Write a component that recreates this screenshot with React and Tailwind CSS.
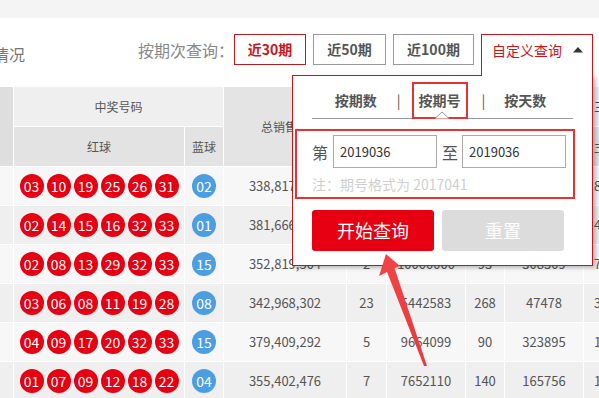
import React from 'react';

const FONT = "font-['Noto_Sans_CJK_SC','Microsoft_YaHei',sans-serif]";

const ROWS = [
  { red: ['03', '10', '19', '25', '26', '31'], blue: '02', sales: '338,817,206', c4: '6', c5: '7521843', c6: '112', c7: '168830', c8: '854' },
  { red: ['02', '14', '15', '16', '32', '33'], blue: '01', sales: '381,666,912', c4: '12', c5: '6127405', c6: '176', c7: '92114', c8: '412' },
  { red: ['02', '08', '13', '29', '32', '33'], blue: '15', sales: '352,819,504', c4: '2', c5: '10000000', c6: '93', c7: '308309', c8: '723' },
  { red: ['03', '06', '08', '11', '19', '28'], blue: '08', sales: '342,968,302', c4: '23', c5: '5442583', c6: '268', c7: '47478', c8: '3621' },
  { red: ['04', '09', '17', '20', '32', '33'], blue: '15', sales: '379,409,292', c4: '5', c5: '9664099', c6: '90', c7: '323895', c8: '1386' },
  { red: ['01', '07', '09', '12', '18', '22'], blue: '04', sales: '355,402,476', c4: '7', c5: '7652110', c6: '140', c7: '165756', c8: '1752' },
];

function Ball({ n, blue }) {
  return (
    <div className={`w-[24px] h-[24px] rounded-full flex items-center justify-center text-white text-[14px] leading-none ${blue ? 'bg-[#4c9ee3]' : 'bg-[#e60012]'}`}>
      {n}
    </div>
  );
}

function Toolbar() {
  return (
    <div className="h-[69px] flex items-start pt-[16px] pr-[6px]">
      <div className="ml-[-39px] mt-[10px] text-[16px] leading-[20px] text-[#777] whitespace-nowrap">开奖情况</div>
      <div className="ml-auto flex items-start">
        <div className="mt-[6px] text-[16px] leading-[20px] text-[#888] whitespace-nowrap">按期次查询：</div>
        <button className="w-[72px] h-[31px] border border-[#b81c22] text-[#c8161d] text-[14px] font-bold">近30期</button>
        <button className="ml-[7px] w-[73px] h-[31px] border border-[#999] text-[#555] text-[14px] font-bold">近50期</button>
        <button className="ml-[7px] w-[81px] h-[31px] border border-[#999] text-[#555] text-[14px] font-bold">近100期</button>
        <div className="relative z-20 ml-[7px] w-[112px] h-[42px] border border-b-0 border-[#c0161e] bg-white flex items-start pt-[5px] pl-[10px]">
          <span className="text-[14px] leading-[20px] text-[#c8161d]">自定义查询</span>
          <svg className="ml-[11px] mt-[6px]" width="10" height="7" viewBox="0 0 10 7"><path d="M0 6.5 L5 1 L10 6.5 Z" fill="#333" /></svg>
        </div>
      </div>
    </div>
  );
}

function HeaderCell({ w, h, bg, children, className = '' }) {
  return (
    <div className={`${w} ${h} ${bg} flex items-center justify-center text-[12px] text-[#555] border-r border-b border-white shrink-0 ${className}`}>
      {children}
    </div>
  );
}

function Table() {
  return (
    <div className="flex flex-col">
      <div className="flex">
        <HeaderCell w="w-[14px]" h="h-[80px]" bg="bg-[#dedede]" />
        <div className="flex flex-col">
          <HeaderCell w="w-[210px]" h="h-[40px]" bg="bg-[#efefef]">中奖号码</HeaderCell>
          <div className="flex">
            <HeaderCell w="w-[171px]" h="h-[40px]" bg="bg-[#e3e3e3]">红球</HeaderCell>
            <HeaderCell w="w-[39px]" h="h-[40px]" bg="bg-[#e3e3e3]">蓝球</HeaderCell>
          </div>
        </div>
        <HeaderCell w="w-[123px]" h="h-[80px]" bg="bg-[#e4e4e4]">总销售额</HeaderCell>
        <div className="flex flex-col">
          <HeaderCell w="w-[119px]" h="h-[40px]" bg="bg-[#efefef]">一等奖</HeaderCell>
          <div className="flex">
            <HeaderCell w="w-[40px]" h="h-[40px]" bg="bg-[#e3e3e3]">注数</HeaderCell>
            <HeaderCell w="w-[79px]" h="h-[40px]" bg="bg-[#e3e3e3]">奖金</HeaderCell>
          </div>
        </div>
        <div className="flex flex-col">
          <HeaderCell w="w-[118px]" h="h-[40px]" bg="bg-[#efefef]">二等奖</HeaderCell>
          <div className="flex">
            <HeaderCell w="w-[39px]" h="h-[40px]" bg="bg-[#e3e3e3]">注数</HeaderCell>
            <HeaderCell w="w-[79px]" h="h-[40px]" bg="bg-[#e3e3e3]">奖金</HeaderCell>
          </div>
        </div>
        <div className="flex flex-col">
          <HeaderCell w="w-[80px]" h="h-[40px]" bg="bg-[#efefef]" className="justify-start pl-[10px]">三等奖</HeaderCell>
          <HeaderCell w="w-[80px]" h="h-[40px]" bg="bg-[#e3e3e3]" className="justify-start pl-[10px]">主数</HeaderCell>
        </div>
      </div>
      {ROWS.map((r, i) => {
        const bg = i % 2 === 0 ? 'bg-[#f7f7f7]' : 'bg-[#efefef]';
        const cell = `h-[39px] ${bg} border-r border-b border-white flex items-center justify-center text-[13px] text-[#555] shrink-0`;
        return (
          <div key={i} className="flex">
            <div className={`${cell} w-[14px]`} />
            <div className={`${cell} w-[171px] gap-[3px]`}>
              {r.red.map((n, j) => <Ball key={j} n={n} />)}
            </div>
            <div className={`${cell} w-[39px]`}><Ball n={r.blue} blue /></div>
            <div className={`${cell} w-[123px]`}>{r.sales}</div>
            <div className={`${cell} w-[40px]`}>{r.c4}</div>
            <div className={`${cell} w-[79px]`}>{r.c5}</div>
            <div className={`${cell} w-[39px]`}>{r.c6}</div>
            <div className={`${cell} w-[79px]`}>{r.c7}</div>
            <div className={`${cell} w-[80px] justify-start pl-[10px]`}>{r.c8}</div>
          </div>
        );
      })}
    </div>
  );
}

function Popup() {
  return (
    <div className="absolute z-10 left-[292px] top-[75px] w-[301px] h-[191px] border border-[#c0161e] bg-white shadow-[3px_2px_4px_rgba(0,0,0,0.25)]">
      <div className="relative mx-[19px] mt-[6px] h-[37px] border-b border-[#999] flex items-start justify-center text-[14px] font-bold text-[#555]">
        <span className="mt-[8px] leading-[20px] ml-[-4px]">按期数</span>
        <span className="mt-[8px] leading-[20px] ml-[20px] font-normal">|</span>
        <div className="ml-[11px] h-[37px] border-2 border-[#e53333] px-[5px] flex items-center">按期号</div>
        <span className="mt-[8px] leading-[20px] ml-[14px] font-normal">|</span>
        <span className="mt-[8px] leading-[20px] ml-[19px]">按天数</span>
        <svg className="absolute left-[123px] bottom-[-1px]" width="14" height="8" viewBox="0 0 14 8">
          <path d="M0 7.5 L7 1 L14 7.5" fill="#fff" stroke="#999" strokeWidth="1" />
        </svg>
      </div>
      <div className="ml-[2px] mt-[10px] w-[280px] h-[70px] border-2 border-[#e53333] pl-[15px] pt-[4px]">
        <div className="flex items-center h-[33px] text-[16px] text-[#555]">
          <span>第</span>
          <div className="ml-[5px] w-[104px] h-[33px] border border-[#aaa] flex items-center pl-[6px] text-[13px] text-[#333]">2019036</div>
          <span className="ml-[5px]">至</span>
          <div className="ml-[4px] w-[104px] h-[33px] border border-[#aaa] flex items-center pl-[6px] text-[13px] text-[#333]">2019036</div>
        </div>
        <div className="mt-[8px] text-[14px] leading-[16px] text-[#cfcfcf]">注：期号格式为 2017041</div>
      </div>
      <div className="ml-[19px] mt-[11px] flex gap-[8px]">
        <button className="w-[122px] h-[41px] rounded-[3px] bg-[#e60012] text-white text-[18px]">开始查询</button>
        <button className="w-[122px] h-[41px] rounded-[3px] bg-[#dcdcdc] text-white text-[18px]">重置</button>
      </div>
    </div>
  );
}

export default function App() {
  return (
    <div className={`relative w-[599px] h-[398px] overflow-hidden bg-white ${FONT}`}>
      <div className="h-[18px] bg-[#f4f4f4]" />
      <Toolbar />
      <Table />
      <Popup />
      <svg className="absolute left-0 top-0 z-30 pointer-events-none" width="599" height="398" viewBox="0 0 599 398">
        <defs>
          <linearGradient id="arr" x1="0" y1="0" x2="0" y2="1">
            <stop offset="0" stopColor="#f24444" />
            <stop offset="1" stopColor="#e83a3a" />
          </linearGradient>
        </defs>
        <polygon points="386,254 400,266 394.5,268 427,366 424,366 387,272 379,276" fill="url(#arr)" />
      </svg>
    </div>
  );
}
